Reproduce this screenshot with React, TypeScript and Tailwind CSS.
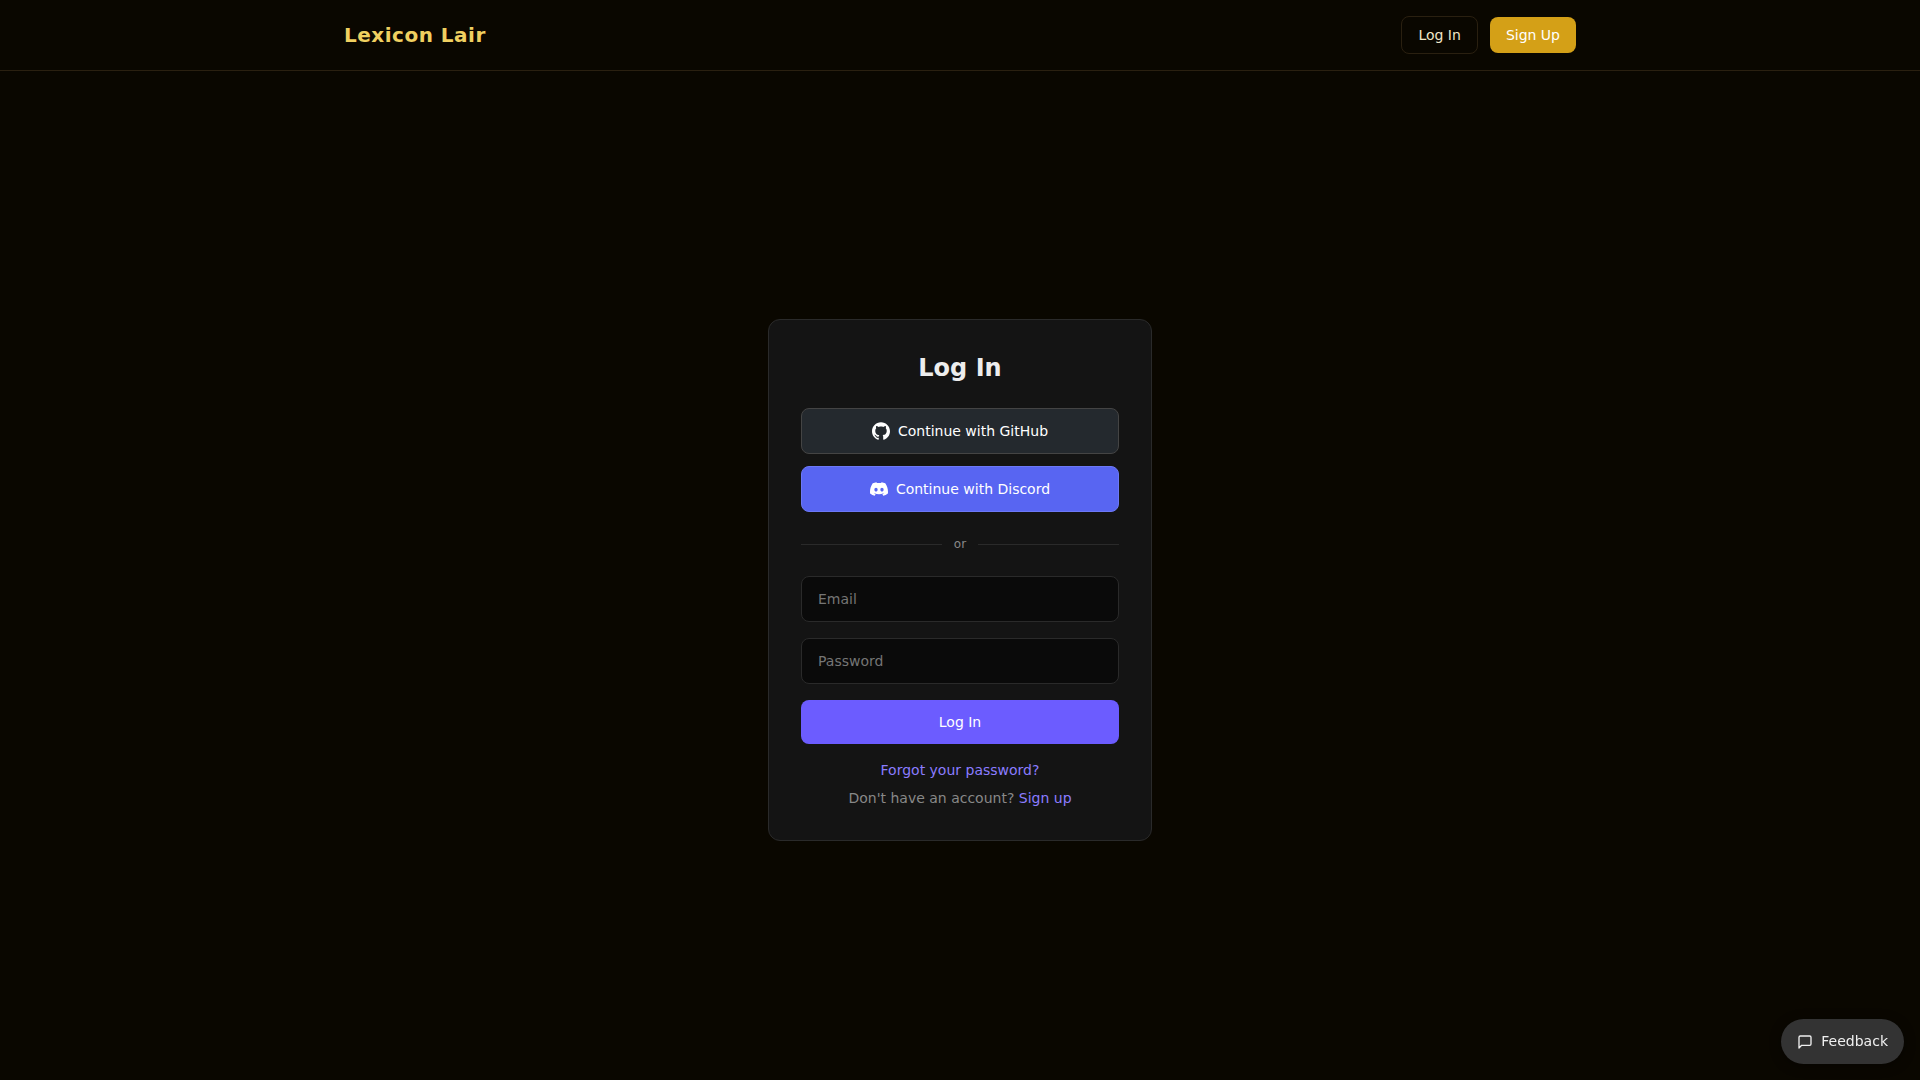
import { SiDiscord, SiGithub } from 'react-icons/si';

const inputClass =
  'w-full rounded-lg border border-[#2a2a2a] bg-[#0a0a0a] px-4 py-3 text-sm text-[#ededed] placeholder:text-[#757575] outline-none focus:border-[#6c5cff]';

const oauthClass =
  'flex w-full cursor-pointer items-center justify-center gap-2 rounded-lg border px-4 py-3 text-sm text-white';

function Header() {
  return (
    <header className="border-b border-[#2a2010]">
      <div className="mx-auto flex max-w-7xl items-center justify-between px-6 py-4">
        <a href="#" className="text-xl font-bold tracking-wide text-[#f0d060]">
          Lexicon Lair
        </a>
        <nav className="flex items-center gap-3">
          <a href="#login" className="rounded-lg border border-[#2a2010] px-4 py-2 text-sm text-[#f0e6c8]">
            Log In
          </a>
          <a href="#signup" className="rounded-lg bg-[#d4a017] px-4 py-2 text-sm text-white">
            Sign Up
          </a>
        </nav>
      </div>
    </header>
  );
}

function LoginCard() {
  return (
    <div className="w-full max-w-sm rounded-xl border border-[#2a2a2a] bg-[#141414] p-8">
      <h1 className="mb-6 text-center text-2xl font-bold text-[#ededed]">Log In</h1>

      <div className="flex flex-col gap-3">
        <button type="button" className={`${oauthClass} border-[#444444] bg-[#24292e]`}>
          <SiGithub size={18} />
          Continue with GitHub
        </button>
        <button type="button" className={`${oauthClass} border-[#6c78f5] bg-[#5865f2]`}>
          <SiDiscord size={18} />
          Continue with Discord
        </button>
      </div>

      {/* Divider */}
      <div className="my-6 flex items-center gap-3">
        <div className="h-px flex-1 bg-[#2a2a2a]" />
        <span className="text-xs text-[#888888]">or</span>
        <div className="h-px flex-1 bg-[#2a2a2a]" />
      </div>

      <form className="flex flex-col gap-4" onSubmit={(e) => e.preventDefault()}>
        <input type="email" aria-label="Email" placeholder="Email" className={inputClass} />
        <input type="password" aria-label="Password" placeholder="Password" className={inputClass} />
        <button type="submit" className="w-full cursor-pointer rounded-lg bg-[#6c5cff] py-3 text-sm text-white">
          Log In
        </button>
      </form>

      <div className="mt-4 flex flex-col gap-2 text-center text-sm text-[#888888]">
        <p>
          <a href="#forgot" className="text-[#8b7cff]">Forgot your password?</a>
        </p>
        <p>
          Don't have an account?{' '}
          <a href="#signup" className="text-[#8b7cff]">Sign up</a>
        </p>
      </div>
    </div>
  );
}

function FeedbackButton() {
  return (
    <button
      type="button"
      className="fixed right-4 bottom-4 flex cursor-pointer items-center gap-2 rounded-full bg-[#333333] px-4 py-3 text-sm/[21px] text-[#f0f0f0] shadow-[0_2px_12px_rgba(0,0,0,0.4)]"
    >
      <svg
        className="h-4 w-4"
        fill="none"
        viewBox="0 0 24 24"
        stroke="currentColor"
        strokeWidth={2}
        strokeLinecap="round"
        strokeLinejoin="round"
      >
        <path d="M21 15a2 2 0 0 1-2 2H7l-4 4V5a2 2 0 0 1 2-2h14a2 2 0 0 1 2 2z" />
      </svg>
      Feedback
    </button>
  );
}

export default function App() {
  return (
    <div className="flex min-h-screen flex-col bg-[#0a0700] font-['DejaVu_Sans',sans-serif]">
      <Header />
      <main className="flex flex-1 items-center justify-center px-4 pt-[9px]">
        <LoginCard />
      </main>
      <FeedbackButton />
    </div>
  );
}
